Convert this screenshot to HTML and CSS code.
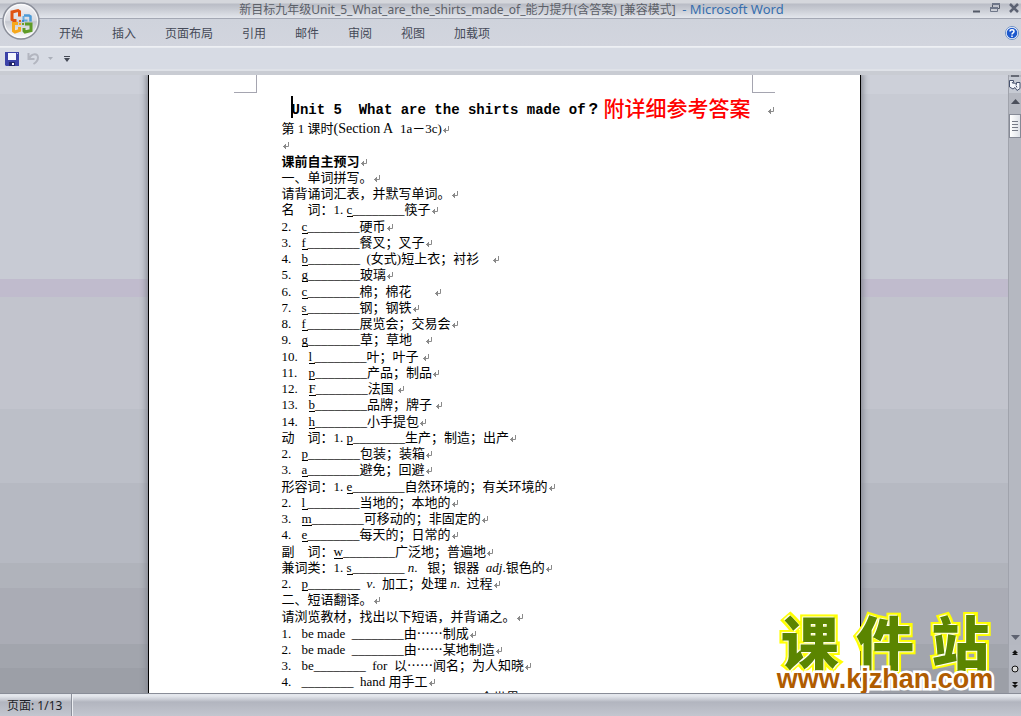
FILE: index.html
```html
<!DOCTYPE html>
<html lang="zh-CN">
<head>
<meta charset="utf-8">
<title>Microsoft Word</title>
<link rel="stylesheet" href="styles.css">
</head>
<body>
<svg class="defs" aria-hidden="true">
  <symbol id="ret" viewBox="0 0 8 7"><path d="M6.500 0v4.500H1M3.500 2v5M2.500 3v3M1.500 4v1" fill="none" stroke="#8a8a8a"/></symbol>
</svg>
<div class="app">
  <header class="titlebar">
    <h1 class="caption">新目标九年级Unit_5_What_are_the_shirts_made_of_能力提升(含答案) [兼容模式]&nbsp;<span class="appname"> - Microsoft Word</span></h1>
    <div class="winbtns">
      <button aria-label="最小化"><svg width="8" height="10"><path d="M0 8.500h7" stroke="#555b68" stroke-width="2"/></svg></button>
      <button aria-label="还原"><svg width="10" height="10"><path d="M2.500 4V1.500h7v4H8" fill="none" stroke="#555b68"/><path d="M0 4h8v2H0zM2 0h8v2H2z" fill="#6f7789"/><path d="M.5 5v3.500h7V5" fill="none" stroke="#6f7789"/></svg></button>
      <button aria-label="关闭"><svg width="10" height="10"><path d="M1 1l8 8M9 1L1 9" stroke="#5c6272" stroke-width="2.500"/></svg></button>
    </div>
  </header>
  <button class="office" aria-label="Office">
    <svg viewBox="0 0 38 38">
      <defs><linearGradient id="orb" x1="0" y1="0" x2="0" y2="1"><stop offset="0" stop-color="#f4f5f8"/><stop offset=".48" stop-color="#d9dbe1"/><stop offset=".52" stop-color="#c5c8d0"/><stop offset="1" stop-color="#fff"/></linearGradient></defs>
      <circle cx="19" cy="19" r="18" fill="url(#orb)" stroke="#8b8f9a" stroke-width="1.500"/>
      <circle cx="19" cy="19" r="16.500" fill="none" stroke="#fff" opacity=".8"/>
      <path d="M17.500 14.500V9.500l-1.500-1-6 1.500v7.500l1.500 1h3" fill="none" stroke="#df5311" stroke-width="3"/>
      <path d="M22 13.500h5l1.500 1v5" fill="none" stroke="#4c9bd8" stroke-width="2.500"/>
      <path d="M21.500 14v4.500h4" fill="none" stroke="#62abe0" stroke-width="2"/>
      <path d="M16 21.500h-4.500v7.500l1.500 1 4.500-1.500V25" fill="none" stroke="#f6a81c" stroke-width="3"/>
      <path d="M23 22h6v6.500l-6 1.500-1-1V26" fill="none" stroke="#5f9c28" stroke-width="3"/>
      <path d="M17 18h2v2h-2z" fill="#e2611b"/><path d="M17 21h2v2h-2z" fill="#f6a81c"/><path d="M20 18h2v2h-2z" fill="#3e89ca"/><path d="M20 21h2v2h-2z" fill="#6aa52b"/>
    </svg>
  </button>
  <nav class="tabs">
    <button>开始</button><button>插入</button><button>页面布局</button><button>引用</button><button>邮件</button><button>审阅</button><button>视图</button><button>加载项</button>
    <button class="help" aria-label="帮助"><svg width="14" height="14"><circle cx="7" cy="7" r="6.500" fill="#fff" stroke="#6c8fc4"/><circle cx="7" cy="7" r="5.300" fill="#1d58cd"/><path d="M5 5.500c0-2.300 4-2.300 4 0C9 7 7 6.800 7 8.500M7 9.500V11" fill="none" stroke="#fff" stroke-width="1.500"/></svg></button>
  </nav>
  <div class="qat">
    <button aria-label="保存"><svg width="14" height="14"><path d="M0 0h14v14H1L0 13z" fill="#3b42a8"/><path d="M3 1h8v7H3z" fill="#f3f6ff"/><path d="M4 10h6v4H4z" fill="#20246a"/><path d="M7 11h2v2H7z" fill="#fff"/><path d="M12 1h1v1h-1z" fill="#aab2f0"/></svg></button>
    <button aria-label="撤消"><svg width="13" height="13"><path d="M1.500 1v6h6M2 6.500C5 1 11 1 11 5.500c0 3-2 5-4.500 6.500" fill="none" stroke="#b3b6c0" stroke-width="2"/></svg></button>
    <button aria-label="撤消列表"><svg width="5" height="3"><path d="M0 0h5L2.500 3z" fill="#abb0ba"/></svg></button>
    <button class="more" aria-label="自定义快速访问工具栏"><svg width="6" height="6"><path d="M0 .5h6" stroke="#444955"/><path d="M0 2h6L3 6z" fill="#444955"/></svg></button>
  </div>
  <main class="work">
    <div class="canvas">
      <article class="page">
        <div class="corners"><i class="tl"></i><i class="tr"></i></div>
        <h2 class="heading"><span class="caret"></span><span class="title">Unit 5&nbsp; What are the shirts made of</span><span class="q">?</span><span class="red">附详细参考答案</span><svg class="r far"><use href="#ret"/></svg></h2>
        <div class="lines">
          <p>第 1 课时<span class="wide">(Section A&nbsp; </span>1a－3c)<svg class="r"><use href="#ret"/></svg></p>
          <p><svg class="r"><use href="#ret"/></svg></p>
          <p class="b">课前自主预习<svg class="r"><use href="#ret"/></svg></p>
          <p>一、单词拼写。<svg class="r"><use href="#ret"/></svg></p>
          <p>请背诵词汇表，并默写单词。<svg class="r"><use href="#ret"/></svg></p>
          <p>名　词：<b>1.</b><u>c</u>________筷子<svg class="r"><use href="#ret"/></svg></p>
          <p><b class="n">2.</b><u>c</u>________硬币<svg class="r"><use href="#ret"/></svg></p>
          <p><b class="n">3.</b><u>f</u>________餐叉；叉子<svg class="r"><use href="#ret"/></svg></p>
          <p><b class="n">4.</b><u>b</u>________&nbsp; (女式)短上衣；衬衫　<svg class="r"><use href="#ret"/></svg></p>
          <p><b class="n">5.</b><u>g</u>________玻璃<svg class="r"><use href="#ret"/></svg></p>
          <p><b class="n">6.</b><u>c</u>________棉；棉花　&nbsp; &nbsp;<svg class="r"><use href="#ret"/></svg></p>
          <p><b class="n">7.</b><u>s</u>________钢；钢铁<svg class="r"><use href="#ret"/></svg></p>
          <p><b class="n">8.</b><u>f</u>________展览会；交易会<svg class="r"><use href="#ret"/></svg></p>
          <p><b class="n">9.</b><u>g</u>________草；草地　<svg class="r"><use href="#ret"/></svg></p>
          <p><b class="m">10.</b><u>l</u>________叶；叶子&nbsp;<svg class="r"><use href="#ret"/></svg></p>
          <p><b class="m">11.</b><u>p</u>________产品；制品<svg class="r"><use href="#ret"/></svg></p>
          <p><b class="m">12.</b><u>F</u>________法国&nbsp;<svg class="r"><use href="#ret"/></svg></p>
          <p><b class="m">13.</b><u>b</u>________品牌；牌子&nbsp;<svg class="r"><use href="#ret"/></svg></p>
          <p><b class="m">14.</b><u>h</u>________小手提包<svg class="r"><use href="#ret"/></svg></p>
          <p>动　词：<b>1.</b><u>p</u>________生产；制造；出产<svg class="r"><use href="#ret"/></svg></p>
          <p><b class="n">2.</b><u>p</u>________包装；装箱<svg class="r"><use href="#ret"/></svg></p>
          <p><b class="n">3.</b><u>a</u>________避免；回避<svg class="r"><use href="#ret"/></svg></p>
          <p>形容词：<b>1.</b><u>e</u>________自然环境的；有关环境的<svg class="r"><use href="#ret"/></svg></p>
          <p><b class="n">2.</b><u>l</u>________当地的；本地的<svg class="r"><use href="#ret"/></svg></p>
          <p><b class="n">3.</b><u>m</u>________可移动的；非固定的<svg class="r"><use href="#ret"/></svg></p>
          <p><b class="n">4.</b><u>e</u>________每天的；日常的<svg class="r"><use href="#ret"/></svg></p>
          <p>副　词：<u>w</u>________广泛地；普遍地<svg class="r"><use href="#ret"/></svg></p>
          <p>兼词类：<b>1.</b><u>s</u>________ <em>n</em>.&nbsp; &nbsp;银；银器&nbsp; <em>adj</em>.银色的<svg class="r"><use href="#ret"/></svg></p>
          <p><b class="n">2.</b><u>p</u>________&nbsp; <em>v</em>.&nbsp; 加工；处理 <em>n</em>.&nbsp; 过程<svg class="r"><use href="#ret"/></svg></p>
          <p>二、短语翻译。<svg class="r"><use href="#ret"/></svg></p>
          <p>请浏览教材，找出以下短语，并背诵之。<svg class="r"><use href="#ret"/></svg></p>
          <p><b class="n">1.</b>be made&nbsp; ________由<span class="cjk">……</span>制成<svg class="r"><use href="#ret"/></svg></p>
          <p><b class="n">2.</b>be made&nbsp; ________由<span class="cjk">……</span>某地制造<svg class="r"><use href="#ret"/></svg></p>
          <p><b class="n">3.</b>be________&nbsp; for&nbsp; 以<span class="cjk">……</span>闻名；为人知晓<svg class="r"><use href="#ret"/></svg></p>
          <p><b class="n">4.</b>________&nbsp; hand 用手工<svg class="r"><use href="#ret"/></svg></p>
          <p><b class="n">5.</b>___________________________ 全世界</p>
        </div>
      </article>
      <div class="mark"><div class="name"><span>课</span><span>件</span><span>站</span></div><div class="url">www.kjzhan.com</div></div>
    </div>
    <div class="scroll">
      <i class="split"></i>
      <button class="ruler" aria-label="标尺"><svg width="12" height="12"><path d="M.5 1.500h4v2l3 2V3.500h3.500v6l-3 2-2-3-2 1.500-3.500-2z" fill="#f4f6fb" stroke="#47526e"/><path d="M3 3l1.500 2M7 6.500l1 2" stroke="#47526e"/></svg></button>
      <button class="up" aria-label="向上"><svg width="9" height="5"><path d="M0 5L4.500 0 9 5z" fill="#4b4f5b"/></svg></button>
      <div class="track"><div class="thumb"><i></i><i></i><i></i><i></i></div></div>
      <button aria-label="向下"><svg width="9" height="5"><path d="M0 0h9L4.500 5z" fill="#5f6371"/></svg></button>
      <div class="browse">
        <button aria-label="前一页"><svg width="6" height="6"><path d="M3 0l3 3H0zM3 2l3 3H0z" fill="#111"/></svg></button>
        <button aria-label="选择浏览对象"><svg width="8" height="8"><circle cx="4" cy="4" r="3" fill="#d8d8d8" stroke="#111"/></svg></button>
        <button aria-label="下一页"><svg width="6" height="6"><path d="M0 0h6L3 3zM0 3h6L3 6z" fill="#111"/></svg></button>
      </div>
    </div>
  </main>
  <footer class="status"><button>页面: 1/13</button></footer>
</div>
</body>
</html>
```
FILE: styles.css
```css
* { box-sizing: border-box; }
body { margin: 0; font: 12px "Noto Sans", "Noto Sans CJK SC", sans-serif; color: #454a58; }
button { border: 0; padding: 0; background: none; font: inherit; color: inherit; display: flex; align-items: center; justify-content: center; }
.defs { position: absolute; width: 0; height: 0; }
.app { height: 100vh; display: flex; flex-direction: column; background: #cfd3dc; overflow: hidden; position: relative; }
.titlebar { height: 19px; flex: none; display: flex; align-items: center; background: linear-gradient(#d5d7dc 0 3px, #b9bcc5 4px, #c7cad2 9px, #e3e6ec 18px); border-bottom: 1px solid #a4a8b4; }
.caption { flex: 1; margin: 0; padding-left: 50px; text-align: center; font-size: 12px; line-height: 18px; font-weight: 400; color: #5c6068; white-space: nowrap; }
.appname { font-size: 13px; color: #376fae; }
.winbtns { display: flex; gap: 9px; padding-right: 2px; margin-top: -2px; }
.office { position: absolute; left: 2px; top: 2px; width: 38px; height: 38px; }
.office svg { width: 100%; height: 100%; }
.tabs { height: 28px; flex: none; display: flex; align-items: center; gap: 29px; padding: 0 2px 0 59px; background: linear-gradient(#cfd3dc, #d2d5de); border-bottom: 1px solid #eef0f4; }
.tabs .help { margin-left: auto; }
.qat { height: 24px; flex: none; display: flex; align-items: center; gap: 8px; padding-left: 5px; background: #d7dbe4; border-top: 1px solid #e8ebf0; border-bottom: 2px solid #dfe2e8; }
.qat .more { padding-left: 3px; }
.work { flex: 1; min-height: 0; display: flex; border-top: 4px solid #c9ccd3; }
.canvas { flex: 1; min-width: 0; position: relative; overflow: hidden; background: linear-gradient(#cdd0d9 0 3%, #c8cbd4 3% 33%, #c0bbcd 33% 36%, #c2c4cd 36% 54%, #bcbfc8 54% 66%, #b6b9c2 66% 79%, #b0b3bb 79% 83%, #aaacb5 83% 92%, #a2a5ad 92% 96%, #9c9fa7 96%); }
.page { width: 713px; max-width: 100%; height: 100%; margin: 0 auto; padding: 0 85px; overflow: hidden; background: #fff; border: solid #000; border-width: 0 1px; box-shadow: 0 0 6px 2px #858891; color: #000; font: 13px/16px "Liberation Serif", "Noto Sans CJK SC", serif; white-space: nowrap; }
.corners { display: flex; justify-content: space-between; height: 18px; }
.corners i { width: 23px; border-bottom: 1px solid #a5a5b0; }
.tl { border-right: 1px solid #a5a5b0; }
.tr { border-left: 1px solid #a5a5b0; }
.heading { margin: 0; padding-left: 57px; height: 28px; display: flex; align-items: center; font: 700 14px/28px "Liberation Mono", monospace; white-space: pre; }
.title, .q { padding-top: 6px; }
.caret { width: 2px; height: 22px; margin-right: -1px; background: #000; }
.q { width: 18px; padding-left: 3px; font-size: 16px; }
.red { color: red; font: 500 21px/28px "Noto Sans CJK SC", sans-serif; }
.lines { padding-left: 48px; }
.lines p { margin: 0; height: 16px; }
.lines p:nth-child(4n + 2) { height: 17px; }
.lines b { display: inline-block; width: 13px; font-weight: 400; }
.lines .n { width: 20px; }
.lines .m { width: 27px; }
.lines u { display: inline-block; min-width: 6px; height: 14px; line-height: 14px; border-bottom: 1px solid #000; text-decoration: none; }
.lines .b { font-weight: 700; }
.wide { font-size: 14px; }
.cjk { font-family: "Noto Sans CJK SC", sans-serif; }
.r { width: 8px; height: 7px; }
.far { margin: 6px 0 0 16px; }
.mark { position: absolute; right: 10px; bottom: 0; width: 226px; }
.name { display: flex; justify-content: space-around; height: 50px; font: 900 58px/50px "Noto Sans CJK SC", sans-serif; color: #5b8500; -webkit-text-stroke: 6px #ff0; paint-order: stroke fill; text-shadow: 1px 1px 1px #fff, -1px -1px 1px #fff; }
.url { font: 700 27px/28px "Liberation Sans", sans-serif; color: #b05c00; text-align: center; -webkit-text-stroke: 5px #fff; paint-order: stroke fill; }
.scroll { width: 13px; flex: none; display: flex; flex-direction: column; background: #b5b8c1; border-left: 1px solid #a0a3ac; }
.split { height: 2px; flex: none; margin: 0 2px; background: #666a75; }
.scroll .ruler { height: 16px; background: #c6cad3; }
.scroll .up { height: 16px; }
.track { flex: 1; padding-top: 5px; }
.thumb { height: 24px; display: flex; flex-direction: column; justify-content: center; gap: 2px; padding: 0 2px; background: linear-gradient(90deg, #fff, #dfe2e8); border: 1px solid #868a96; }
.thumb i { height: 1px; background: #777b87; }
.browse { height: 48px; margin-top: 5px; display: flex; flex-direction: column; justify-content: space-around; background: #b6b9c2; }
.status { height: 23px; flex: none; display: flex; background: linear-gradient(#e4e7ed 0 2px, #cdd0d8 5px, #b2b5bf 8px, #c3c6cf 22px); border-top: 1px solid #898d98; color: #1c1f27; }
.status button { padding: 0 9px 0 7px; border-right: 1px solid #8c909b; box-shadow: 1px 0 #eceef2; }
```
